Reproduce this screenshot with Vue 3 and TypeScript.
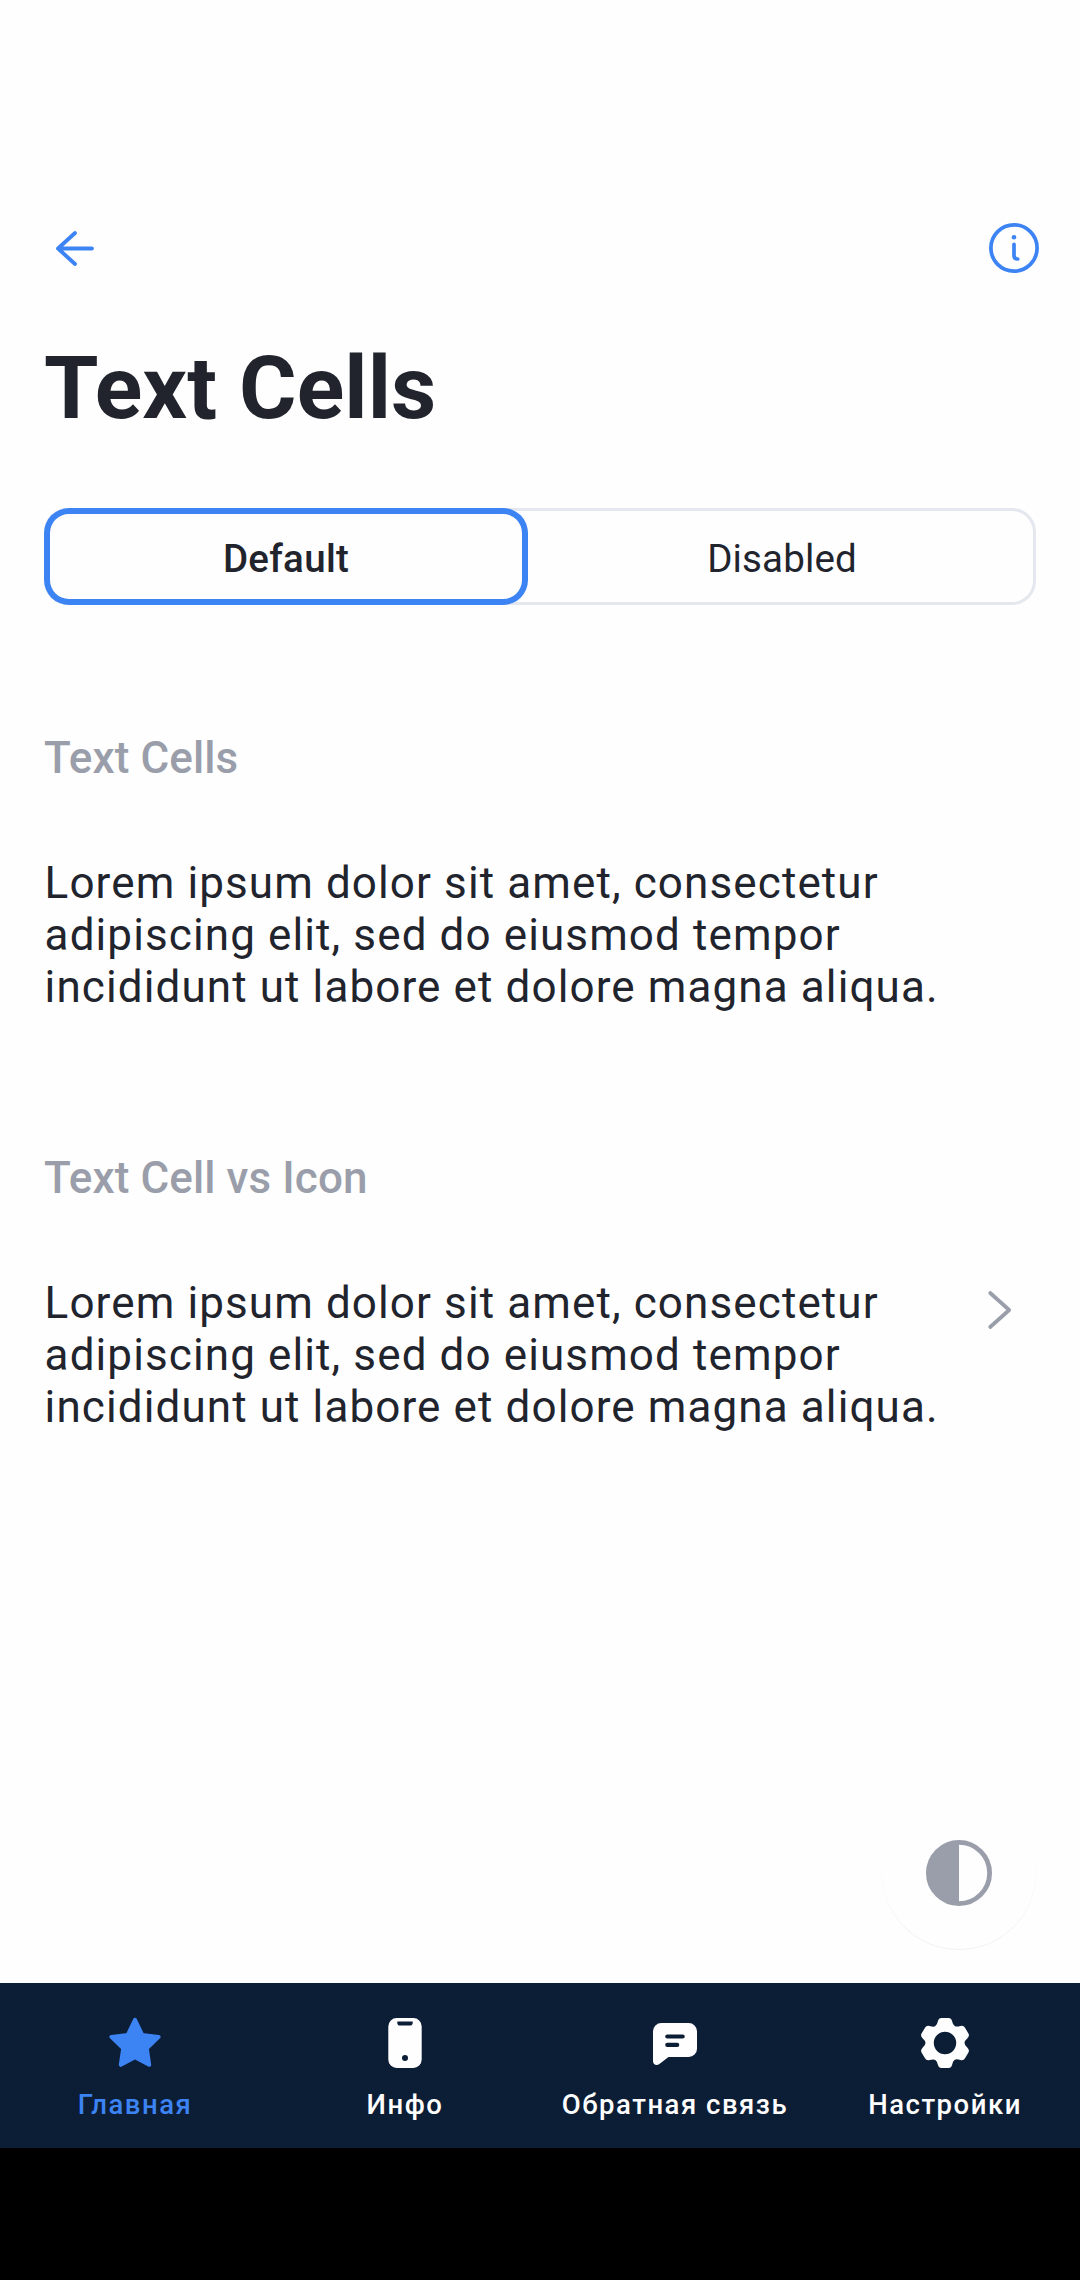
<script setup lang="ts">
import { ref } from 'vue'

type IconName = 'star' | 'phone' | 'chat' | 'gear'

interface NavItem {
  label: string
  icon: IconName
}

const tabs = ['Default', 'Disabled']
const activeTab = ref(0)
const activeNav = ref(0)

const lorem = [
  'Lorem ipsum dolor sit amet, consectetur',
  'adipiscing elit, sed do eiusmod tempor',
  'incididunt ut labore et dolore magna aliqua.',
]

const sections = [
  { title: 'Text Cells', chevron: false },
  { title: 'Text Cell vs Icon', chevron: true },
]

const navItems: NavItem[] = [
  { label: 'Главная', icon: 'star' },
  { label: 'Инфо', icon: 'phone' },
  { label: 'Обратная связь', icon: 'chat' },
  { label: 'Настройки', icon: 'gear' },
]

// Builds the six-toothed outline by rotating one tooth around the centre.
function gearOutline(): string {
  const turn = (x: number, y: number, k: number): string => {
    const a = (k * Math.PI) / 3
    const rx = 33 + x * Math.cos(a) - y * Math.sin(a)
    const ry = 33 + x * Math.sin(a) + y * Math.cos(a)
    return `${rx.toFixed(2)} ${ry.toFixed(2)}`
  }
  let d = `M${turn(-9.7, -16.9, 0)}`
  for (let k = 0; k < 6; k++) {
    const p = (x: number, y: number) => turn(x, y, k)
    d += `Q${p(-7.9, -17.9)} ${p(-7.1, -21.8)}Q${p(-6.2, -25)} ${p(-3.6, -25)}`
    d += `L${p(3.6, -25)}Q${p(6.2, -25)} ${p(7.1, -21.8)}Q${p(7.9, -17.9)} ${p(9.7, -16.9)}`
  }
  return d + 'Z'
}

const gearPath = gearOutline() + 'M33 21.8a11.2 11.2 0 1 0 0 22.4a11.2 11.2 0 1 0 0-22.4Z'
</script>

<template>
  <div class="screen">
    <header class="toolbar">
      <svg class="icon" viewBox="0 0 66 66" fill="none" stroke="currentColor" stroke-width="3.8" stroke-linecap="round" stroke-linejoin="round">
        <path d="M43 18L26 33.5L43 49M26 33.5H60" />
      </svg>
      <svg class="icon" viewBox="0 0 66 66" fill="none" stroke="currentColor" stroke-width="3.7" stroke-linecap="round">
        <circle cx="33" cy="33" r="23.1" />
        <path d="M33 29.3V40.5Q33 44 36.7 44" />
        <circle cx="33" cy="22.2" r="2.3" fill="currentColor" stroke="none" />
      </svg>
    </header>

    <h1 class="title">Text Cells</h1>

    <div class="segments">
      <button
        v-for="(tab, i) in tabs"
        :key="tab"
        class="segment"
        :class="{ active: i === activeTab }"
        @click="activeTab = i"
      >{{ tab }}</button>
    </div>

    <section v-for="s in sections" :key="s.title" class="section">
      <h2 class="subtitle">{{ s.title }}</h2>
      <div class="cell">
        <p class="copy">
          <span v-for="line in lorem" :key="line" class="line">{{ line }}</span>
        </p>
        <svg v-if="s.chevron" class="icon chevron" viewBox="0 0 66 66" fill="none" stroke="currentColor" stroke-width="3.7" stroke-linecap="round" stroke-linejoin="round">
          <path d="M23.2 16L42.2 33L23.2 50" />
        </svg>
      </div>
    </section>

    <button class="fab" aria-label="Theme">
      <svg viewBox="0 0 66 66">
        <circle cx="33" cy="33" r="30.6" fill="none" stroke="currentColor" stroke-width="4.8" />
        <path d="M33 1A32 32 0 0 0 33 65Z" fill="currentColor" />
      </svg>
    </button>

    <nav class="navbar">
      <a v-for="(item, i) in navItems" :key="item.label" class="nav-item" :class="{ current: i === activeNav }" @click="activeNav = i">
        <svg class="icon" viewBox="0 0 66 66" fill="currentColor" fill-rule="evenodd">
          <path v-if="item.icon === 'star'" stroke="currentColor" stroke-width="4" stroke-linejoin="round" d="M33 9.8L40.2 24.9L56.6 26.9L44.8 38.2L47.2 54.8L33 47.2L18.8 54.8L21.2 38.2L9.4 26.9L25.8 24.9Z" />
          <path v-else-if="item.icon === 'phone'" d="M24.8 8H41.2A8.4 8.4 0 0 1 49.7 16.4V49.6A8.4 8.4 0 0 1 41.2 58H24.8A8.4 8.4 0 0 1 16.3 49.6V16.4A8.4 8.4 0 0 1 24.8 8ZM25.3 11.5V12.7Q25.3 15.5 28.1 15.5H37.9Q40.7 15.5 40.7 12.7V11.5ZM33 45a3 3 0 1 0 0 6a3 3 0 1 0 0-6Z" />
          <path v-else-if="item.icon === 'chat'" d="M19.3 13H46.7A8.3 8.3 0 0 1 55 21.3V38.7A8.3 8.3 0 0 1 46.7 47H26.5L17.4 54.1C14.5 56.2 11 54.6 11 51V21.3A8.3 8.3 0 0 1 19.3 13ZM25.3 24.4a2.1 2.1 0 0 0 0 4.2H40.7a2.1 2.1 0 0 0 0-4.2ZM25.3 32.8a2.1 2.1 0 0 0 0 4.2H35.2a2.1 2.1 0 0 0 0-4.2Z" />
          <path v-else :d="gearPath" />
        </svg>
        <span class="nav-label">{{ item.label }}</span>
      </a>
    </nav>
    <div class="system-bar"></div>
  </div>
</template>

<style>
body {
  background: #fefefe;
}
</style>

<style scoped>
.screen {
  position: relative;
  display: flex;
  flex-direction: column;
  width: 1080px;
  height: 2280px;
  overflow: hidden;
  background: #fefefe;
  color: #21242d;
  font-family: Roboto, 'Liberation Sans', sans-serif;
}
.icon {
  display: block;
  flex: none;
  width: 66px;
  height: 66px;
}
.toolbar {
  display: flex;
  justify-content: space-between;
  margin: 215px 33px 0 32px;
  color: #3c83f3;
}
.title {
  margin: 55px 44px 0;
  font-size: 88px;
  line-height: 104px;
  font-weight: 700;
  letter-spacing: 0.1px;
}
.segments {
  display: flex;
  box-sizing: border-box;
  height: 97px;
  margin: 68px 44px 127px;
  border-radius: 24px;
  box-shadow: inset 0 0 0 3px #e4e7ee;
}
.segment {
  box-sizing: border-box;
  flex: 1;
  padding: 4px 0 0;
  border: 0;
  border-radius: 25px;
  background: none;
  color: inherit;
  font: 400 38.5px/46px Roboto, 'Liberation Sans', sans-serif;
  letter-spacing: 0.15px;
}
.segment.active {
  flex: 0 0 484px;
  box-shadow: inset 0 0 0 6px #3c83f3;
  background: #fefefe;
  font-weight: 500;
  letter-spacing: 0.3px;
}
.section {
  height: 420px;
}
.subtitle {
  margin: 0 44px;
  color: #9a9eaa;
  font-size: 44px;
  line-height: 52px;
  font-weight: 500;
  letter-spacing: 0.09px;
}
.cell {
  display: flex;
  justify-content: space-between;
  margin: 73px 47px 0 44.6px;
}
.copy {
  margin: 0;
  font-size: 44px;
  line-height: 52px;
  letter-spacing: 1.11px;
  white-space: nowrap;
}
.line {
  display: block;
}
.chevron {
  color: #9a9eaa;
}
.fab {
  position: absolute;
  left: 882px;
  top: 1795px;
  display: flex;
  align-items: center;
  justify-content: center;
  width: 154px;
  height: 154px;
  padding: 2px 0 0;
  border: 0;
  border-radius: 50%;
  background: #fefefe;
  box-shadow: 0 1px 1px rgba(0, 0, 0, 0.05);
  color: #9a9eaa;
}
.fab svg {
  width: 66px;
  height: 66px;
}
.navbar {
  display: flex;
  flex: none;
  height: 165px;
  margin-top: auto;
  background: #0c1d36;
  color: #fefefe;
}
.nav-item {
  display: flex;
  flex: 1 1 0;
  flex-direction: column;
  align-items: center;
  gap: 12px;
  min-width: 0;
  padding-top: 27px;
}
.nav-item.current {
  color: #3c83f3;
}
.nav-label {
  font-size: 27.5px;
  line-height: 33px;
  font-weight: 500;
  letter-spacing: 1.52px;
  white-space: nowrap;
}
.system-bar {
  flex: none;
  height: 132px;
  background: #000;
}
</style>
